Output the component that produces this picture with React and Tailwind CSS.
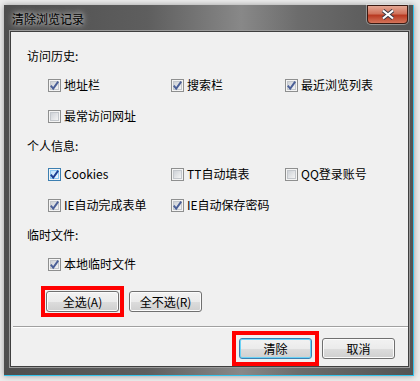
import React, { useId } from "react";

// Win7 style checkbox drawn as svg
function CheckBox({ checked, hot }) {
  const id = useId();
  return (
    <svg width="13" height="13" viewBox="0 0 13 13" className="shrink-0">
      <defs>
        <linearGradient id={id} x1="0" y1="0" x2="1" y2="1">
          <stop offset="0" stopColor={hot ? "#b9dffb" : "#cbcfd5"} />
          <stop offset="1" stopColor={hot ? "#f2f9ff" : "#f6f6f6"} />
        </linearGradient>
      </defs>
      <rect x="0.5" y="0.5" width="12" height="12" fill="#f4f4f4" stroke={hot ? "#3c7fb1" : "#8e8f8f"} />
      <rect x="2.5" y="2.5" width="8" height="8" fill={`url(#${id})`} stroke={hot ? "#8dc8f2" : "#c3c7cc"} />
      {checked && (
        <path
          d="M2.8 6.6 L5.2 9.6 L10.2 2.6"
          fill="none"
          stroke={hot ? "#1c3f94" : "#4a5f97"}
          strokeWidth="1.9"
          strokeLinejoin="miter"
        />
      )}
    </svg>
  );
}

function Item({ label, checked, hot }) {
  return (
    <div className="flex items-center gap-[3px] h-[20px]">
      <CheckBox checked={checked} hot={hot} />
      <span className="text-[12px] leading-none text-black">{label}</span>
    </div>
  );
}

function Row({ items, className }) {
  return (
    <div className={"grid grid-cols-[123px_114px_1fr] pl-[37px] h-[20px] " + className}>
      {items.map((it) => (
        <Item key={it.label} {...it} />
      ))}
    </div>
  );
}

function WinButton({ children, focused }) {
  return (
    <button
      className={
        "h-[21px] rounded-[3px] border text-[12px] leading-none text-black bg-[linear-gradient(#f2f2f2_0%,#ebebeb_50%,#dddddd_50%,#cfcfcf_100%)] " +
        (focused
          ? "w-[73px] border-[#3c7fb1] shadow-[inset_0_0_0_1px_#6ad2f6]"
          : "w-[73px] border-[#707070] shadow-[inset_0_0_0_1px_#fbfbfb]")
      }
    >
      {children}
    </button>
  );
}

export default function App() {
  return (
    <div className="w-[420px] h-[381px] bg-[#ececec] pt-[5px] pl-[4px] font-['Noto_Sans_CJK_SC','Noto_Sans',sans-serif]">
      <div className="w-[410px] h-[371px] flex flex-col border-r border-b border-[#34c3ec] bg-[linear-gradient(90deg,#4e4e4e_0%,#5e5e5e_35%,#888888_58%,#6c6c6c_72%,#535353_100%)] shadow-[0_0_6px_rgba(0,0,0,0.35)]">
        {/* title bar */}
        <div className="h-[26px] flex items-start shrink-0">
          <span className="pl-[8px] pt-[8px] text-[12px] leading-none text-black [text-shadow:0_0_5px_#d8d8d8,0_0_9px_rgba(255,255,255,0.6)]">
            清除浏览记录
          </span>
          <div className="ml-auto mr-[5px] w-[41px] h-[19px] flex items-center justify-center rounded-b-[4px] border border-[#3a1a12] shadow-[0_0_0_1px_rgba(255,255,255,0.35)] bg-[linear-gradient(#e4a794_0%,#d0735c_45%,#b93a22_55%,#d4745a_100%)]">
            <svg width="14" height="11" viewBox="0 0 14 11">
              <path d="M2 1.5 L12 9.5 M12 1.5 L2 9.5" stroke="#3a3a46" strokeWidth="4" />
              <path d="M2 1.5 L12 9.5 M12 1.5 L2 9.5" stroke="#ffffff" strokeWidth="2.2" />
            </svg>
          </div>
        </div>

        {/* client area */}
        <div className="ml-[6px] mr-[4px] h-[336px] border border-[#3f3f3f] shadow-[0_0_0_1px_#9a9a9a] bg-[#f0f0f0] flex flex-col">
          <div className="mt-[14px] pl-[16px] h-[20px] flex items-center text-[12px] text-black">访问历史:</div>
          <Row
            className="mt-[9px]"
            items={[
              { label: "地址栏", checked: true },
              { label: "搜索栏", checked: true },
              { label: "最近浏览列表", checked: true },
            ]}
          />
          <Row className="mt-[11px]" items={[{ label: "最常访问网址", checked: false }]} />

          <div className="mt-[10px] pl-[16px] h-[20px] flex items-center text-[12px] text-black">个人信息:</div>
          <Row
            className="mt-[8px]"
            items={[
              { label: "Cookies", checked: true, hot: true },
              { label: "TT自动填表", checked: false },
              { label: "QQ登录账号", checked: false },
            ]}
          />
          <Row
            className="mt-[11px]"
            items={[
              { label: "IE自动完成表单", checked: true },
              { label: "IE自动保存密码", checked: true },
            ]}
          />

          <div className="mt-[10px] pl-[16px] h-[20px] flex items-center text-[12px] text-black">临时文件:</div>
          <Row className="mt-[9px]" items={[{ label: "本地临时文件", checked: true }]} />

          <div className="mt-[17px] pl-[35px] flex gap-[10px]">
            <div className="outline-4 outline-[#ff0000] outline-offset-[1px] flex">
              <WinButton>全选(A)</WinButton>
            </div>
            <WinButton>全不选(R)</WinButton>
          </div>

          <div className="mt-[14px] ml-[2px] h-[2px] border-t border-[#a0a0a0] bg-white" />

          <div className="mt-[10px] pr-[13px] flex justify-end gap-[10px]">
            <div className="outline-4 outline-[#ff0000] outline-offset-[3px] flex">
              <WinButton focused>清除</WinButton>
            </div>
            <WinButton>取消</WinButton>
          </div>
        </div>
      </div>
    </div>
  );
}
